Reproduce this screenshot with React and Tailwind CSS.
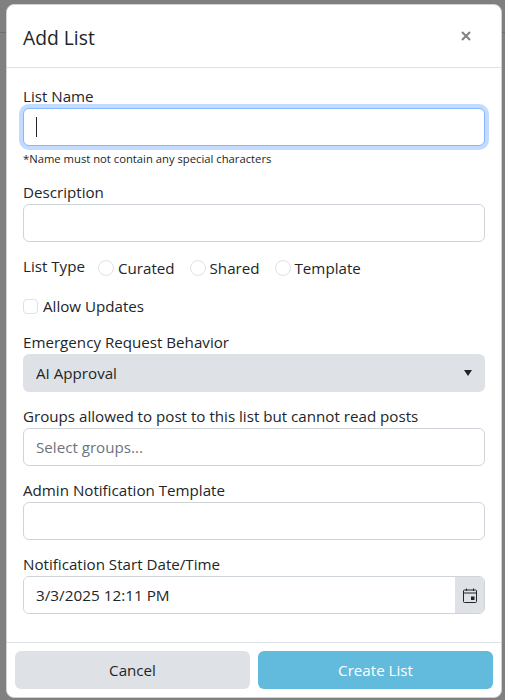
const font = "[font-family:'Open_Sans','Noto_Sans',sans-serif]";

function Label({ children }) {
  return <label className="block h-6 text-[15.15px] leading-6 text-[#212529]">{children}</label>;
}

function Radio({ label }) {
  return (
    <span className="flex items-center gap-[4px]">
      <span className="h-4 w-4 rounded-full border border-[#dee2e6] bg-white" />
      <span className="text-[15.15px] leading-6 text-[#212529]">{label}</span>
    </span>
  );
}

function Field({ label, placeholder, value }) {
  return (
    <div className="mb-3">
      <Label>{label}</Label>
      <input
        readOnly
        placeholder={placeholder}
        value={value}
        className="block h-[38px] w-full rounded-[6px] border border-[#ced4da] bg-white px-3 text-[15.15px] text-[#212529] outline-none placeholder:text-[#6c757d]"
      />
    </div>
  );
}

export default function App() {
  return (
    <div className={`relative h-[700px] w-[505px] overflow-hidden bg-[#808080] ${font}`}>
      <div className="absolute inset-x-0 top-[32px] h-px bg-[#6f6f6f]" />
      <div className="relative mx-[6px] mt-[4px] flex h-[694px] w-[496px] flex-col rounded-[8px] border border-[#d0d0d0] bg-white">
        <header className="flex h-[63px] shrink-0 items-center justify-between border-b border-[#dee2e6] pl-4 pr-[30px]">
          <h1 className="pt-[4px] text-[19.3px] leading-[30px] text-[#212529]">Add List</h1>
          <svg width="10" height="10" viewBox="0 0 10 10" className="text-[#808080]">
            <path d="M1 1l8 8M9 1l-8 8" stroke="currentColor" strokeWidth="2" fill="none" />
          </svg>
        </header>

        <div className="flex-1 px-4 pt-4">
          <div className="mb-3">
            <Label>List Name</Label>
            <div className="relative">
              <input
                readOnly
                className="block h-[38px] w-full rounded-[6px] border border-[#86b7fe] bg-white px-3 text-[15px] outline-none ring-4 ring-[#0d6efd]/25"
              />
              <div className="absolute left-[13px] top-[9px] h-[20px] w-px bg-[#212529]" />
            </div>
            <p className="mt-1 text-[11.25px] leading-[18px] text-[#212529]">
              *Name must not contain any special characters
            </p>
          </div>

          <Field label="Description" />

          <div className="mb-3 flex h-[28px] items-center">
            <span className="mr-[13px] -translate-y-[2px] text-[15.15px] leading-6 text-[#212529]">List Type</span>
            <div className="flex items-center gap-[15px]">
              <Radio label="Curated" />
              <Radio label="Shared" />
              <Radio label="Template" />
            </div>
          </div>

          <div className="mb-3 flex h-6 items-center gap-[5px]">
            <span className="h-[15px] w-[15px] rounded-[4px] border border-[#dee2e6] bg-white" />
            <span className="text-[15.15px] leading-6 text-[#212529]">Allow Updates</span>
          </div>

          <div className="mb-3">
            <Label>Emergency Request Behavior</Label>
            <div className="flex h-[38px] items-center justify-between rounded-[6px] bg-[#dee2e6] pl-[13px] pr-[13px]">
              <span className="text-[15.15px] text-[#212529]">AI Approval</span>
              <svg width="8" height="6" viewBox="0 0 8 6">
                <path d="M0 0h8L4 6z" fill="#212529" />
              </svg>
            </div>
          </div>

          <Field label="Groups allowed to post to this list but cannot read posts" placeholder="Select groups..." />
          <Field label="Admin Notification Template" />

          <div>
            <Label>Notification Start Date/Time</Label>
            <div className="flex h-[38px] overflow-hidden rounded-[6px] border border-[#ced4da]">
              <input
                readOnly
                value="3/3/2025 12:11 PM"
                className="min-w-0 flex-1 bg-white px-3 text-[15.3px] text-[#212529] outline-none"
              />
              <div className="flex w-[29px] items-center justify-center bg-[#dee2e6]">
                <svg width="14" height="15" viewBox="0 0 14 15" fill="none">
                  <rect x="0.5" y="2" width="13" height="12.5" rx="1" stroke="#212529" />
                  <path d="M0.5 5h13" stroke="#212529" />
                  <path d="M3.5 0.5v2.5M10.5 0.5v2.5" stroke="#212529" />
                  <rect x="8" y="8.5" width="3.5" height="3.5" fill="#212529" />
                </svg>
              </div>
            </div>
          </div>
        </div>

        <footer className="flex h-[55px] shrink-0 items-start gap-2 border-t border-[#dee2e6] px-2 pt-2">
          <button className="h-[38px] flex-1 rounded-[6px] bg-[#dee2e6] text-[15.15px] text-[#212529]">Cancel</button>
          <button className="h-[38px] flex-1 rounded-[6px] bg-[#62bbdd] text-[15.15px] text-white">Create List</button>
        </footer>
      </div>
    </div>
  );
}
